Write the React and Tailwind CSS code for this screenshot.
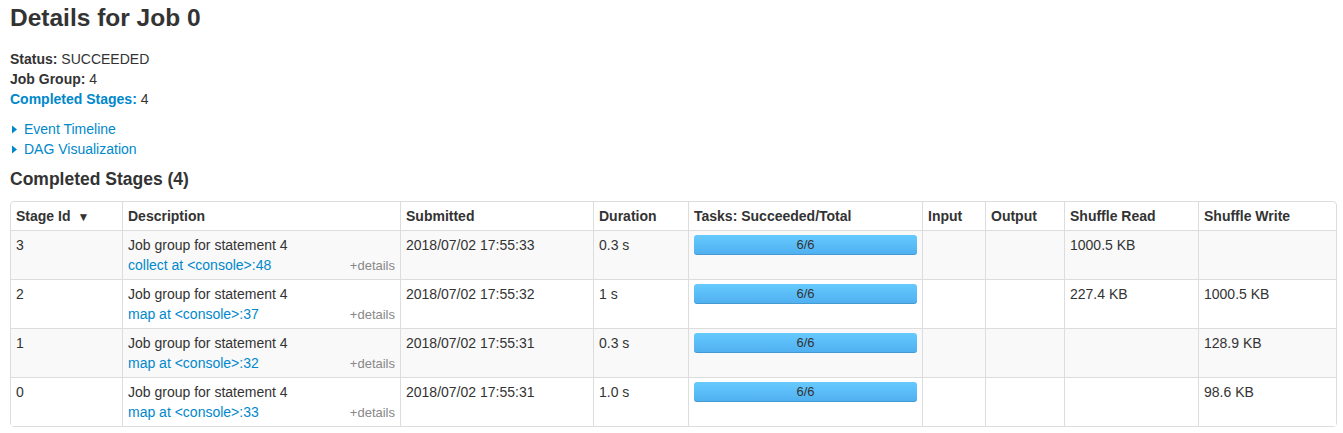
const stages = [
  { id: 3, desc: "collect at <console>:48", submitted: "2018/07/02 17:55:33", duration: "0.3 s", read: "1000.5 KB", write: "" },
  { id: 2, desc: "map at <console>:37", submitted: "2018/07/02 17:55:32", duration: "1 s", read: "227.4 KB", write: "1000.5 KB" },
  { id: 1, desc: "map at <console>:32", submitted: "2018/07/02 17:55:31", duration: "0.3 s", read: "", write: "128.9 KB" },
  { id: 0, desc: "map at <console>:33", submitted: "2018/07/02 17:55:31", duration: "1.0 s", read: "", write: "98.6 KB" },
];

const cols = [
  ["Stage Id", 111],
  ["Description", 278],
  ["Submitted", 193],
  ["Duration", 95],
  ["Tasks: Succeeded/Total", 234],
  ["Input", 63],
  ["Output", 79],
  ["Shuffle Read", 134],
  ["Shuffle Write", 138],
];

function Arrow() {
  return (
    <svg width="5" height="9" viewBox="0 0 5 9" className="ml-[2px] mr-[7px]">
      <path d="M0 0.5 L5 4.5 L0 8.5 Z" fill="#0088cc" />
    </svg>
  );
}

function ProgressBar({ done, total }) {
  return (
    <div className="h-[20px] rounded-[3px] bg-gradient-to-b from-[#66cafe] to-[#4faff0] shadow-[inset_0_-1px_0_rgba(0,0,0,0.12)] text-center text-[13px] leading-[19px] text-[#333]">
      {done}/{total}
    </div>
  );
}

export default function App() {
  const cell = "border-l border-t border-[#ddd] px-[5px] py-[4px] align-top text-left";

  return (
    <div className="px-[10px] text-[14px] leading-[20px] text-[#333] bg-white min-h-[433px]" style={{ fontFamily: '"Liberation Sans", Arial, sans-serif' }}>
      <h3 className="text-[24.5px] font-bold leading-[36px]">Details for Job 0</h3>

      <ul className="mt-[13px]">
        <li><strong>Status:</strong> SUCCEEDED</li>
        <li><strong>Job Group:</strong> 4</li>
        <li>
          <a className="font-bold text-[#0088cc]">Completed Stages:</a> 4
        </li>
      </ul>

      <div className="mt-[10px] text-[#0088cc]">
        <div className="flex items-center"><Arrow />Event Timeline</div>
        <div className="flex items-center"><Arrow />DAG Visualization</div>
      </div>

      <h4 className="mt-[10px] text-[17.5px] font-bold leading-[20px]">Completed Stages (4)</h4>

      <table className="mt-[12px] table-fixed border-separate border-spacing-0 border border-[#ddd] rounded-[4px] w-[1327px]">
        <colgroup>
          {cols.map(([name, w]) => (
            <col key={name} style={{ width: w }} />
          ))}
        </colgroup>
        <thead>
          <tr>
            {cols.map(([name], i) => (
              <th key={name} className={`${cell} border-t-0 font-bold ${i === 0 ? "border-l-0" : ""}`}>
                {name}
                {i === 0 && <span className="ml-[7px] text-[12px] leading-none">▼</span>}
              </th>
            ))}
          </tr>
        </thead>
        <tbody>
          {stages.map((s, idx) => (
            <tr key={s.id} className={idx % 2 === 0 ? "bg-[#f9f9f9]" : "bg-white"}>
              <td className={`${cell} border-l-0`}>{s.id}</td>
              <td className={cell}>
                <div>Job group for statement 4</div>
                <div className="flex items-end justify-between">
                  <a className="text-[#0088cc]">{s.desc}</a>
                  <span className="text-[13px] text-[#888] leading-[19px]">+details</span>
                </div>
              </td>
              <td className={cell}>{s.submitted}</td>
              <td className={cell}>{s.duration}</td>
              <td className={cell}>
                <ProgressBar done={6} total={6} />
              </td>
              <td className={cell}></td>
              <td className={cell}></td>
              <td className={cell}>{s.read}</td>
              <td className={cell}>{s.write}</td>
            </tr>
          ))}
        </tbody>
      </table>
    </div>
  );
}
